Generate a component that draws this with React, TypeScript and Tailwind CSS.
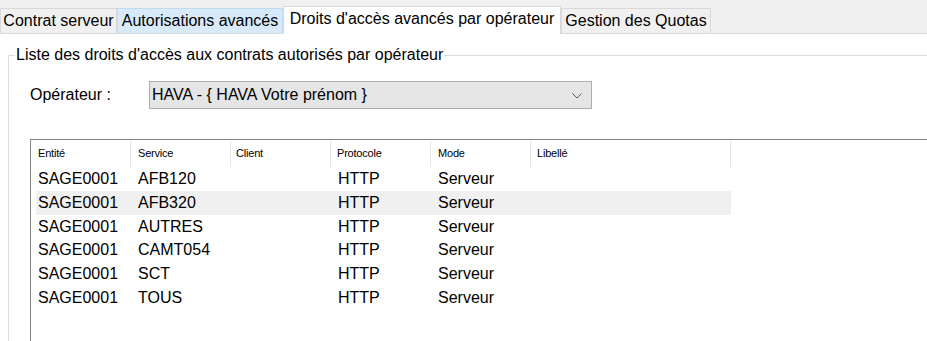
import React from "react";

const rows = [
  { entite: "SAGE0001", service: "AFB120", protocole: "HTTP", mode: "Serveur" },
  { entite: "SAGE0001", service: "AFB320", protocole: "HTTP", mode: "Serveur" },
  { entite: "SAGE0001", service: "AUTRES", protocole: "HTTP", mode: "Serveur" },
  { entite: "SAGE0001", service: "CAMT054", protocole: "HTTP", mode: "Serveur" },
  { entite: "SAGE0001", service: "SCT", protocole: "HTTP", mode: "Serveur" },
  { entite: "SAGE0001", service: "TOUS", protocole: "HTTP", mode: "Serveur" },
];

/* TABS */

function Tab({ label, width, kind }: { label: string; width: string; kind: "normal" | "hover" | "active" }) {
  const base = "flex items-center justify-center border-t border-l border-r whitespace-nowrap text-[16px] leading-[18px] text-black";
  if (kind === "active") {
    return (
      <div className={`${base} ${width} h-[28px] mb-[-1px] bg-white border-[#d9d9d9] pb-[4px]`}>
        {label}
      </div>
    );
  }
  if (kind === "hover") {
    return (
      <div className={`${base} ${width} h-[25px] bg-[#d8eaf9] border-[#c0dcf3]`}>
        {label}
      </div>
    );
  }
  return (
    <div className={`${base} ${width} h-[25px] bg-[#f0f0f0] border-[#d9d9d9]`}>
      {label}
    </div>
  );
}

export default function App() {
  return (
    <div className="w-[927px] h-[341px] overflow-hidden bg-white font-['Liberation_Sans',Arial,sans-serif] text-black">

      {/* TAB STRIP */}
      <div className="h-[34px] flex items-end bg-[#f0f0f0] border-b border-[#d9d9d9]">
        <Tab label="Contrat serveur" width="w-[117px]" kind="normal" />
        <Tab label="Autorisations avancés" width="w-[166px]" kind="hover" />
        <Tab label="Droits d'accès avancés par opérateur" width="w-[278px]" kind="active" />
        <Tab label="Gestion des Quotas" width="w-[150px]" kind="normal" />
      </div>

      {/* GROUP BOX */}
      <fieldset className="ml-[8px] mt-[12px] w-[940px] h-[320px] border border-[#dcdcdc] pl-[6px] pr-0">
        <legend className="px-[1px] text-[16px] leading-[18px]">
          Liste des droits d'accès aux contrats autorisés par opérateur
        </legend>

        {/* OPERATEUR */}
        <div className="flex items-center mt-[17px] ml-[15px]">
          <div className="w-[119px] text-[16px] leading-[18px]">Opérateur :</div>
          <div className="w-[443px] h-[28px] flex items-center justify-between bg-[#e5e5e5] border border-[#adadad] pl-[2px] pr-[9px]">
            <span className="text-[16px] leading-[18px]">HAVA - {"{"} HAVA Votre prénom {"}"}</span>
            <svg width="10" height="6" viewBox="0 0 10 6" className="mt-[1px]">
              <path d="M0.5 0.5 L5 5 L9.5 0.5" fill="none" stroke="#5a5a5a" strokeWidth="1" />
            </svg>
          </div>
        </div>

        {/* LIST VIEW */}
        <div className="mt-[30px] ml-[15px] w-[920px] h-[220px] border border-[#828790] bg-white">

          <div className="flex pt-[1px] h-[27px] text-[11px] leading-[24px] tracking-[-0.2px]">
            <div className="w-[100px] h-[26px] border-r border-[#e5e5e5] pl-[7px]">Entité</div>
            <div className="w-[100px] h-[26px] border-r border-[#e5e5e5] pl-[7px]">Service</div>
            <div className="w-[100px] h-[26px] border-r border-[#e5e5e5] pl-[5px]">Client</div>
            <div className="w-[100px] h-[26px] border-r border-[#e5e5e5] pl-[6px]">Protocole</div>
            <div className="w-[100px] h-[26px] border-r border-[#e5e5e5] pl-[7px]">Mode</div>
            <div className="w-[200px] h-[26px] border-r border-[#e5e5e5] pl-[6px]">Libellé</div>
          </div>

          {rows.map((r, i) => (
            <div
              key={i}
              className={`flex ml-[5px] w-[695px] h-[23.8px] text-[16px] leading-[24px] ${i === 1 ? "bg-[#f0f0f0]" : ""}`}
            >
              <div className="w-[95px] pl-[2px]">{r.entite}</div>
              <div className="w-[100px] pl-[7px]">{r.service}</div>
              <div className="w-[100px] pl-[7px]"></div>
              <div className="w-[100px] pl-[7px]">{r.protocole}</div>
              <div className="w-[100px] pl-[7px]">{r.mode}</div>
              <div className="w-[200px] pl-[7px]"></div>
            </div>
          ))}

        </div>
      </fieldset>

    </div>
  );
}
